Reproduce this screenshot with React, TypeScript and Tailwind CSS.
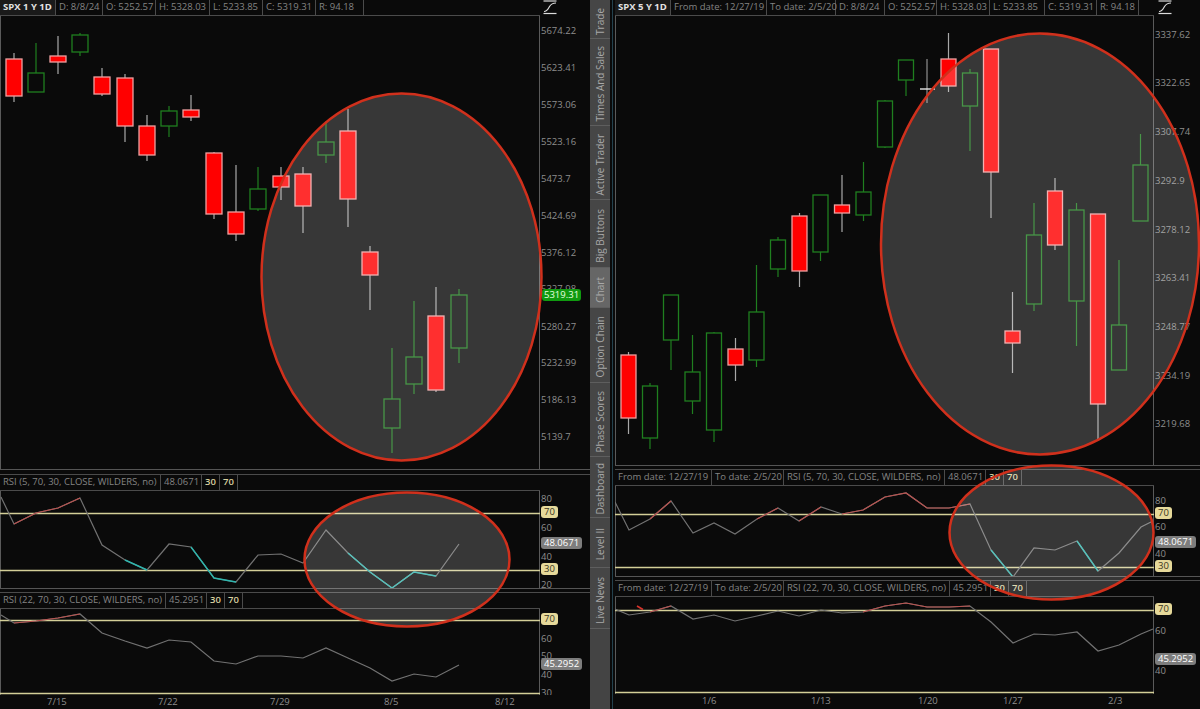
import React from "react";

type C = [number, number, number, number, number, "r" | "g"];
type P = [number, number];
type Tick = { y: number; t: string; k?: "y" | "g" | "b" };

const leftC: C[] = [
  [14, 53, 59, 96, 102, "r"], [36, 43, 73, 92, 92, "g"], [58, 36, 56, 62, 74, "r"], [80, 33, 35, 52, 56, "g"],
  [102, 68, 77, 94, 96, "r"], [125, 74, 78, 126, 142, "r"], [147, 115, 126, 155, 161, "r"], [169, 106, 111, 126, 137, "g"],
  [191, 95, 110, 117, 121, "r"], [214, 152, 153, 214, 219, "r"], [236, 165, 212, 234, 241, "r"], [258, 167, 189, 209, 211, "g"],
  [281, 167, 176, 187, 200, "r"], [303, 167, 174, 206, 233, "r"], [326, 121, 142, 155, 163, "g"], [348, 109, 131, 199, 227, "r"],
  [370, 246, 252, 275, 310, "r"], [392, 348, 399, 428, 453, "g"], [414, 301, 357, 384, 394, "g"], [436, 287, 316, 390, 392, "r"],
  [459, 289, 295, 348, 363, "g"],
];
const rightC: C[] = [
  [628.5, 352, 355, 418, 434, "r"], [650, 383, 386, 438, 449, "g"], [671, 295, 295, 340, 370, "g"], [692.5, 335, 372, 401, 414, "g"],
  [714, 332, 333, 430, 442, "g"], [735.5, 338, 349, 365, 381, "r"], [756.5, 265, 312, 360, 367, "g"], [778, 237, 240, 269, 277, "g"],
  [799.5, 213, 216, 271, 287, "r"], [820.5, 195, 195, 252, 261, "g"], [842, 175, 205, 213, 232, "r"], [863.5, 162, 192, 215, 221, "g"],
  [885, 100, 101, 147, 148, "g"], [906, 60, 60, 80, 96, "g"], [948.5, 33, 59, 86, 92, "r"], [970, 69, 73, 106, 151, "g"],
  [991, 49, 49, 172, 218, "r"], [1012.5, 292, 331, 343, 373, "r"], [1034, 203, 235, 304, 311, "g"], [1055, 178, 191, 245, 250, "r"],
  [1076.5, 203, 210, 301, 346, "g"], [1098, 214, 214, 404, 440, "r"], [1119, 260, 325, 370, 370, "g"], [1140.5, 134, 165, 221, 221, "g"],
];

const lx = [14, 36, 58, 80, 102, 125, 147, 169, 191, 214, 236, 258, 281, 303, 326, 348, 370, 392, 414, 436, 459];
const rx = [615, 629, 650, 671, 693, 714, 735, 757, 778, 799, 821, 842, 863, 885, 906, 927, 949, 970, 991, 1013, 1034, 1055, 1077, 1098, 1119, 1141, 1153];
const zip = (xs: number[], ys: number[], start?: P): P[] => [...(start ? [start] : []), ...xs.map((x, i) => [x, ys[i]] as P)];

const lRsi1 = zip(lx, [524, 513, 508, 498, 545, 560, 570, 544, 547, 578, 582, 555, 554, 563, 530, 553, 572, 588, 572, 576, 544], [1, 497]);
const lRsi2 = zip(lx, [623, 621, 618, 614, 633, 641, 648, 640, 642, 661, 664, 656, 656, 658, 648, 658, 668, 681, 674, 677, 665], [1, 615]);
const rRsi1 = zip(rx, [502, 530, 519, 501, 533, 523, 534, 519, 508, 521, 507, 514, 510, 497, 493, 508, 508, 504, 550, 577, 548, 550, 541, 571, 553, 527, 521]);
const rRsi2 = zip(rx, [610, 616, 613, 607, 620, 616, 622, 617, 612, 617, 611, 614, 613, 607, 604, 608, 608, 607, 623, 644, 635, 636, 633, 652, 646, 635, 630]);

const RED = "#b9524f";
const CYAN = "#2fb5ad";

function Candles({ data, w }: { data: C[]; w: number }) {
  return (
    <>
      {data.map(([x, top, a, b, bot, c], i) => (
        <g key={i}>
          <line x1={x} x2={x} y1={top} y2={bot} stroke={c === "r" ? "#a8a8a8" : "#1f7f1f"} strokeWidth={1.2} />
          <rect
            x={x - w / 2}
            y={a}
            width={w}
            height={b - a}
            fill={c === "r" ? "#ff0000" : "#0a0a0a"}
            stroke={c === "r" ? "#eea0a0" : "#1f7f1f"}
            strokeWidth={1.3}
          />
        </g>
      ))}
    </>
  );
}

function Rsi({ pts, reds, cyans, levels, x0, x1 }: { pts: P[]; reds: P[]; cyans: P[]; levels: number[]; x0: number; x1: number }) {
  const s = (a: P[]) => a.map((p) => p.join(",")).join(" ");
  return (
    <>
      {levels.map((y) => (
        <line key={y} x1={x0} x2={x1} y1={y + 0.5} y2={y + 0.5} stroke="#d4cf98" strokeWidth={1.4} />
      ))}
      <polyline points={s(pts)} fill="none" stroke="#727272" strokeWidth={1.2} />
      {reds.map(([a, b]) => (
        <polyline key={a} points={s(pts.slice(a, b + 1))} fill="none" stroke={RED} strokeWidth={1.2} />
      ))}
      {cyans.map(([a, b]) => (
        <polyline key={a} points={s(pts.slice(a, b + 1))} fill="none" stroke={CYAN} strokeWidth={1.4} />
      ))}
    </>
  );
}

function Axis({ top, ticks, className }: { top: number; ticks: Tick[]; className: string }) {
  return (
    <div className={`relative ${className}`}>
      {ticks.map((t, i) => (
        <span
          key={i}
          style={{ top: t.y - top }}
          className={
            "absolute -translate-y-1/2 whitespace-nowrap text-[9.5px] leading-[12px] " +
            (t.k === "y"
              ? "left-[1px] rounded-[3px] bg-[#e6d99a] px-[3px] text-[#3a3520]"
              : t.k === "g"
                ? "left-[2px] rounded-[3px] bg-[#109a10] px-[2px] text-[#e8ffe0]"
                : t.k === "b"
                  ? "left-[1px] rounded-[3px] bg-[#7d7d7d] px-[3px] text-white"
                  : "left-[1px] text-[#8e8e8e]")
          }
        >
          {t.t}
        </span>
      ))}
    </div>
  );
}

function Cells({ cells, className }: { cells: { t: string; w: string; k?: "title" | "lvl" }[]; className?: string }) {
  return (
    <div className={`flex h-full border-b border-[#4b4b4b] ${className ?? ""}`}>
      {cells.map((c, i) => (
        <div
          key={i}
          className={
            `flex shrink-0 items-center whitespace-nowrap border-r border-[#4b4b4b] pl-[3px] text-[9.5px] ${c.w} ` +
            (c.k === "title"
              ? "bg-[#1a1a1a] font-bold text-[#e2e2e2]"
              : c.k === "lvl"
                ? "font-semibold text-[#d9d1a0]"
                : "text-[#848484]")
          }
        >
          {c.t}
        </div>
      ))}
      <div className="flex-1" />
    </div>
  );
}

function CurveIcon() {
  return (
    <svg viewBox="0 0 14 15" className="h-[15px] w-[14px] shrink-0" fill="none" stroke="#dcdcdc" strokeWidth="1.2">
      <path d="M0.5 1H13.5" />
      <path d="M0.5 13.5H13.5" />
      <path d="M1 11.5C4 11.5 5 9 6.5 6.5C8 4 9.5 3 13 3" />
    </svg>
  );
}

function Plot({ vb, className, children }: { vb: string; className: string; children: React.ReactNode }) {
  const [x, y, w, h] = vb.split(" ").map(Number);
  return (
    <svg viewBox={vb} className={`block shrink-0 ${className}`}>
      <line x1={x + 0.5} x2={x + 0.5} y1={y} y2={y + h} stroke="#5a5a5a" />
      <line x1={x + w - 0.5} x2={x + w - 0.5} y1={y} y2={y + h} stroke="#5a5a5a" />
      {children}
    </svg>
  );
}

function Dates({ items, className }: { items: { t: string; w: string }[]; className: string }) {
  return (
    <div className={`flex h-[14px] text-[9.5px] text-[#8e8e8e] ${className}`}>
      {items.map((d) => (
        <span key={d.t} className={`leading-[14px] ${d.w}`}>
          {d.t}
        </span>
      ))}
    </div>
  );
}

const tabs = [
  { t: "Trade", h: "h-[39px]" },
  { t: "Times And Sales", h: "h-[87px]" },
  { t: "Active Trader", h: "h-[74px]" },
  { t: "Big Buttons", h: "h-[68px]" },
  { t: "Chart", h: "h-[40px]", on: true },
  { t: "Option Chain", h: "h-[75px]" },
  { t: "Phase Scores", h: "h-[74px]" },
  { t: "Dashboard", h: "h-[61px]" },
  { t: "Level II", h: "h-[50px]" },
  { t: "Live News", h: "h-[61px]" },
];

export default function App() {
  return (
    <div className="relative flex h-[709px] w-[1200px] overflow-hidden bg-[#0a0a0a] font-['Open_Sans',sans-serif]">
      {/* left chart */}
      <div className="flex h-full w-[590px] shrink-0 flex-col">
        <div className="flex h-[16px] shrink-0">
          <Cells
            className="w-[540px] shrink-0"
            cells={[
              { t: "SPX 1 Y 1D", w: "w-[56px]", k: "title" },
              { t: "D: 8/8/24", w: "w-[47px]" },
              { t: "O: 5252.57", w: "w-[53px]" },
              { t: "H: 5328.03", w: "w-[54px]" },
              { t: "L: 5233.85", w: "w-[53px]" },
              { t: "C: 5319.31", w: "w-[53px]" },
              { t: "R: 94.18", w: "w-[48px]" },
            ]}
          />
          <div className="pl-[3px]"><CurveIcon /></div>
        </div>
        <div className="flex h-[454px] shrink-0 border-b border-[#555555]">
          <Plot vb="0 16 540 453" className="h-[453px] w-[540px]">
            <Candles data={leftC} w={16} />
          </Plot>
          <Axis
            top={16}
            className="flex-1"
            ticks={[
              { y: 31, t: "5674.22" }, { y: 68, t: "5623.41" }, { y: 105, t: "5573.06" }, { y: 142, t: "5523.16" },
              { y: 179, t: "5473.7" }, { y: 216, t: "5424.69" }, { y: 253, t: "5376.12" }, { y: 289, t: "5327.98" },
              { y: 295, t: "5319.31", k: "g" }, { y: 327, t: "5280.27" }, { y: 363, t: "5232.99" }, { y: 400, t: "5186.13" },
              { y: 437, t: "5139.7" },
            ]}
          />
        </div>
        <div className="h-[4px] shrink-0" />
        <div className="h-[17px] shrink-0 border-t border-[#4b4b4b]">
          <Cells
            className="w-[540px]"
            cells={[
              { t: "RSI (5, 70, 30, CLOSE, WILDERS, no)", w: "w-[161px]" },
              { t: "48.0671", w: "w-[41px]" },
              { t: "30", w: "w-[18px]", k: "lvl" },
              { t: "70", w: "w-[18px]", k: "lvl" },
            ]}
          />
        </div>
        <div className="flex h-[98px] shrink-0 border-b border-[#555555]">
          <Plot vb="0 491 540 97" className="h-[97px] w-[540px]">
            <Rsi pts={lRsi1} reds={[[1, 4]]} cyans={[[6, 7], [9, 11], [16, 20]]} levels={[513, 570]} x0={0} x1={540} />
          </Plot>
          <Axis
            top={491}
            className="flex-1"
            ticks={[
              { y: 499, t: "80" }, { y: 512, t: "70", k: "y" }, { y: 528, t: "60" }, { y: 543, t: "48.0671", k: "b" },
              { y: 557, t: "40" }, { y: 569, t: "30", k: "y" }, { y: 585, t: "20" },
            ]}
          />
        </div>
        <div className="h-[3px] shrink-0" />
        <div className="h-[17px] shrink-0 border-t border-[#4b4b4b]">
          <Cells
            className="w-[540px]"
            cells={[
              { t: "RSI (22, 70, 30, CLOSE, WILDERS, no)", w: "w-[166px]" },
              { t: "45.2951", w: "w-[41px]" },
              { t: "30", w: "w-[18px]", k: "lvl" },
              { t: "70", w: "w-[18px]", k: "lvl" },
            ]}
          />
        </div>
        <div className="flex h-[86px] shrink-0">
          <Plot vb="0 609 540 86" className="h-[86px] w-[540px]">
            <Rsi pts={lRsi2} reds={[[1, 4]]} cyans={[]} levels={[620, 693]} x0={0} x1={540} />
          </Plot>
          <Axis
            top={609}
            className="flex-1 overflow-hidden"
            ticks={[
              { y: 619, t: "70", k: "y" }, { y: 639, t: "60" }, { y: 656, t: "50" }, { y: 664, t: "45.2952", k: "b" },
              { y: 675, t: "40" }, { y: 693, t: "30" },
            ]}
          />
        </div>
        <Dates
          className="w-[540px] pl-[47px]"
          items={[
            { t: "7/15", w: "w-[111px]" },
            { t: "7/22", w: "w-[112px]" },
            { t: "7/29", w: "w-[111px]" },
            { t: "8/5", w: "w-[111px] pl-[3px]" },
            { t: "8/12", w: "w-[40px] pl-[3px]" },
          ]}
        />
      </div>

      {/* vertical tab strip */}
      <div className="flex h-full w-[20px] shrink-0 flex-col bg-[#444444]">
        {tabs.map((t) => (
          <div
            key={t.t}
            className={`flex shrink-0 items-center justify-center border-b border-[#5e5e5e] pt-[4px] ${t.h} ${t.on ? "bg-[#666666]" : "bg-[#464646]"}`}
          >
            <span className="rotate-180 whitespace-nowrap text-[10px] text-[#a8a8a8] [writing-mode:vertical-rl]">{t.t}</span>
          </div>
        ))}
      </div>
      <div className="flex h-full w-[5px] shrink-0 justify-center bg-[#0a0a0a]">
        <div className="ml-[-1px] h-full w-[1px] bg-[#23414d]" />
      </div>

      {/* right chart */}
      <div className="flex h-full flex-1 flex-col">
        <div className="flex h-[16px] shrink-0">
          <Cells
            className="w-[539px] shrink-0"
            cells={[
              { t: "SPX 5 Y 1D", w: "w-[56px]", k: "title" },
              { t: "From date: 12/27/19", w: "w-[96px]" },
              { t: "To date: 2/5/20", w: "w-[69px]" },
              { t: "D: 8/8/24", w: "w-[49px]" },
              { t: "O: 5252.57", w: "w-[52px]" },
              { t: "H: 5328.03", w: "w-[53px]" },
              { t: "L: 5233.85", w: "w-[55px]" },
              { t: "C: 5319.31", w: "w-[52px]" },
              { t: "R: 94.18", w: "w-[42px]" },
            ]}
          />
          <div className="pl-[4px]"><CurveIcon /></div>
        </div>
        <div className="flex h-[450px] shrink-0 border-b border-[#555555]">
          <Plot vb="615 16 539 449" className="h-[449px] w-[539px]">
            <Candles data={rightC} w={15} />
            <line x1={927} x2={927} y1={59} y2={103} stroke="#a8a8a8" />
            <line x1={920} x2={935} y1={89} y2={89} stroke="#e6e6e6" strokeWidth={1.4} />
          </Plot>
          <Axis
            top={16}
            className="flex-1"
            ticks={[
              { y: 35, t: "3337.62" }, { y: 83, t: "3322.65" }, { y: 132, t: "3307.74" }, { y: 181, t: "3292.9" },
              { y: 230, t: "3278.12" }, { y: 278, t: "3263.41" }, { y: 327, t: "3248.77" }, { y: 376, t: "3234.19" },
              { y: 424, t: "3219.68" },
            ]}
          />
        </div>
        <div className="h-[3px] shrink-0" />
        <div className="h-[17px] shrink-0 border-t border-[#4b4b4b]">
          <Cells
            className="w-[539px]"
            cells={[
              { t: "From date: 12/27/19", w: "w-[97px]" },
              { t: "To date: 2/5/20", w: "w-[72px]" },
              { t: "RSI (5, 70, 30, CLOSE, WILDERS, no)", w: "w-[161px]" },
              { t: "48.0671", w: "w-[41px]" },
              { t: "30", w: "w-[18px]", k: "lvl" },
              { t: "70", w: "w-[18px]", k: "lvl" },
            ]}
          />
        </div>
        <div className="flex h-[91px] shrink-0 border-b border-[#555555]">
          <Plot vb="615 486 539 90" className="h-[90px] w-[539px]">
            <Rsi pts={rRsi1} reds={[[2, 3], [7, 8], [9, 10], [11, 17]]} cyans={[[18, 19], [22, 23]]} levels={[514, 567]} x0={615} x1={1154} />
          </Plot>
          <Axis
            top={486}
            className="flex-1"
            ticks={[
              { y: 501, t: "80" }, { y: 513, t: "70", k: "y" }, { y: 527, t: "60" }, { y: 542, t: "48.0671", k: "b" },
              { y: 554, t: "40" }, { y: 566, t: "30", k: "y" },
            ]}
          />
        </div>
        <div className="h-[3px] shrink-0" />
        <div className="h-[17px] shrink-0 border-t border-[#4b4b4b]">
          <Cells
            className="w-[539px]"
            cells={[
              { t: "From date: 12/27/19", w: "w-[97px]" },
              { t: "To date: 2/5/20", w: "w-[72px]" },
              { t: "RSI (22, 70, 30, CLOSE, WILDERS, no)", w: "w-[166px]" },
              { t: "45.2951", w: "w-[41px]" },
              { t: "30", w: "w-[18px]", k: "lvl" },
              { t: "70", w: "w-[18px]", k: "lvl" },
            ]}
          />
        </div>
        <div className="flex h-[97px] shrink-0">
          <Plot vb="615 598 539 97" className="h-[97px] w-[539px]">
            <Rsi pts={rRsi2} reds={[[2, 3], [12, 17]]} cyans={[]} levels={[611, 693]} x0={615} x1={1154} />
            <line x1={637} x2={643} y1={607} y2={610.5} stroke="#d8342c" strokeWidth={1.6} />
          </Plot>
          <Axis
            top={598}
            className="flex-1"
            ticks={[
              { y: 610, t: "70", k: "y" }, { y: 632, t: "60" }, { y: 660, t: "45.2952", k: "b" }, { y: 672, t: "40" },
            ]}
          />
        </div>
        <Dates
          className="w-[539px] pl-[87px]"
          items={[
            { t: "1/6", w: "w-[109px]" },
            { t: "1/13", w: "w-[107px]" },
            { t: "1/20", w: "w-[85px]" },
            { t: "1/27", w: "w-[105px]" },
            { t: "2/3", w: "w-[30px]" },
          ]}
        />
      </div>

      {/* highlight ellipses lying over the screenshot */}
      <svg viewBox="0 0 1200 709" className="pointer-events-none absolute inset-0 h-[709px] w-[1200px]">
        <g fill="#ffffff" fillOpacity={0.185} stroke="#d0301c" strokeWidth={2.5}>
          <ellipse cx={401.5} cy={277} rx={140} ry={183.5} />
          <ellipse cx={407} cy={559.5} rx={102.5} ry={67} />
          <ellipse cx={1040} cy={244} rx={159} ry={210.5} />
          <ellipse cx={1051.5} cy={532.5} rx={102} ry={67} />
        </g>
      </svg>
    </div>
  );
}
